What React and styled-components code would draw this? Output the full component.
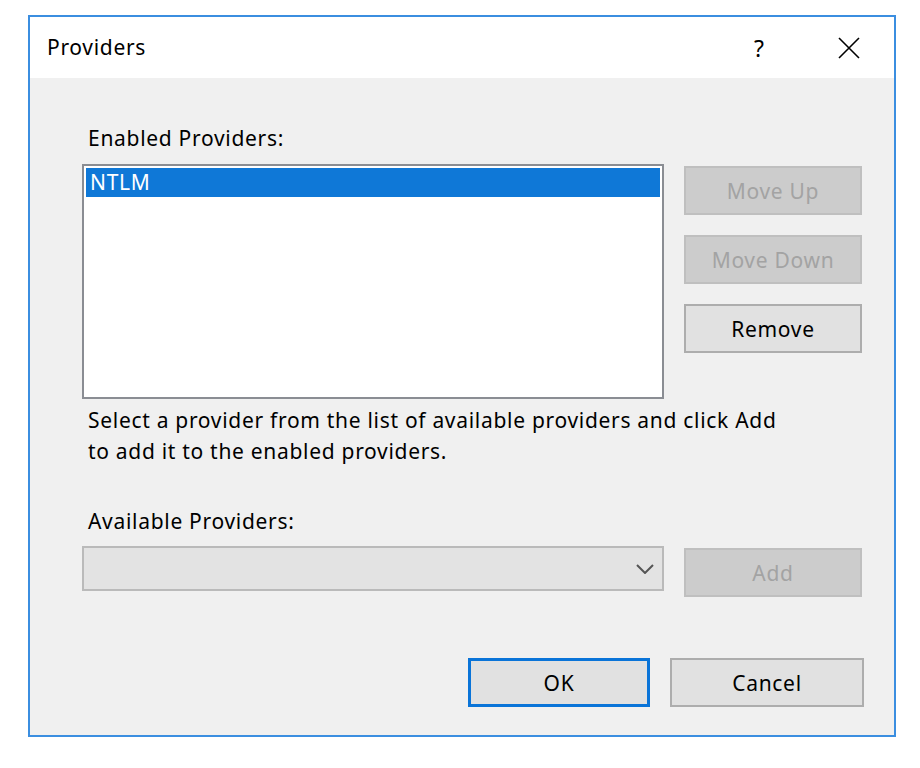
import React, { useState } from 'react';
import styled, { createGlobalStyle } from 'styled-components';

const GlobalStyle = createGlobalStyle`
  body {
    margin: 0;
    background: #ffffff;
    font-family: "Noto Sans", "Open Sans", sans-serif;
    letter-spacing: 0.7px;
  }
`;

const Page = styled.div`
  padding: 15px 0 0 28px;
`;

const Window = styled.div`
  width: 864px;
  height: 718px;
  border: 2px solid #3b8ee0;
  background: #f0f0f0;
  display: flex;
  flex-direction: column;
`;

const TitleBar = styled.div`
  height: 61px;
  background: #ffffff;
  display: flex;
  align-items: center;
  padding-left: 17px;
  color: #000;
  font-size: 21px;
`;

const Title = styled.span`
  flex: 1;
  margin-top: -2px;
`;

const TitleButton = styled.button`
  width: 90px;
  height: 61px;
  border: none;
  background: transparent;
  display: flex;
  align-items: center;
  justify-content: center;
  font-family: inherit;
  font-size: 23px;
  color: #000;
  padding: 0;
`;

const Body = styled.div`
  flex: 1;
  padding: 46px 32px 0 52px;
  font-size: 21px;
  color: #000;
`;

const Label = styled.div`
  line-height: 28px;
  padding-left: 6px;
`;

const Row = styled.div`
  display: grid;
  grid-template-columns: 582px 178px;
  column-gap: 20px;
  align-items: start;
  margin-top: ${p => p.$top || 0}px;
`;

const ListBox = styled.div`
  height: 235px;
  box-sizing: border-box;
  border: 2px solid #8a8d93;
  background: #ffffff;
  padding: 2px;
`;

const ListItem = styled.div`
  height: 29px;
  line-height: 29px;
  padding-left: 4px;
  background: ${p => (p.$selected ? '#0f78d7' : 'transparent')};
  color: ${p => (p.$selected ? '#ffffff' : '#000')};
`;

const ButtonColumn = styled.div`
  display: flex;
  flex-direction: column;
  gap: 20px;
  padding-top: 2px;
`;

const Button = styled.button`
  height: 49px;
  width: ${p => p.$width || 178}px;
  margin-top: ${p => p.$top || 0}px;
  box-sizing: border-box;
  font-family: inherit;
  font-size: 21px;
  letter-spacing: 0.7px;
  padding: 0;
  background: ${p => (p.disabled ? '#cccccc' : '#e1e1e1')};
  color: ${p => (p.disabled ? '#a3a3a3' : '#000')};
  border: ${p => (p.$default ? '3px solid #0a74d8' : p.disabled ? '2px solid #bfbfbf' : '2px solid #adadad')};
`;

const Description = styled.div`
  margin-top: 6px;
  line-height: 31px;
  padding-left: 6px;
`;

const SectionLabel = styled(Label)`
  margin-top: 40px;
`;

const ComboBox = styled.div`
  height: 45px;
  box-sizing: border-box;
  border: 2px solid #bababa;
  background: #e3e3e3;
  display: flex;
  align-items: center;
  justify-content: flex-end;
  padding-right: 8px;
`;

const Footer = styled.div`
  display: flex;
  justify-content: flex-end;
  gap: 20px;
  margin-top: 61px;
  margin-right: -2px;
`;

const Chevron = () => (
  <svg width="18" height="10" viewBox="0 0 18 10">
    <path d="M1 1 L9 9 L17 1" fill="none" stroke="#555" strokeWidth="2" />
  </svg>
);

const CloseIcon = () => (
  <svg width="22" height="22" viewBox="0 0 22 22">
    <path d="M1 1 L21 21 M21 1 L1 21" stroke="#000" strokeWidth="1.6" />
  </svg>
);

const App = () => {
  const [providers] = useState(['NTLM']);
  const [selected] = useState(0);

  return (
    <Page>
      <GlobalStyle />
      <Window>
        <TitleBar>
          <Title>Providers</Title>
          <TitleButton>?</TitleButton>
          <TitleButton>
            <CloseIcon />
          </TitleButton>
        </TitleBar>
        <Body>
          <Label>Enabled Providers:</Label>
          <Row $top={12}>
            <ListBox>
              {providers.map((p, i) => (
                <ListItem key={p} $selected={i === selected}>{p}</ListItem>
              ))}
            </ListBox>
            <ButtonColumn>
              <Button disabled>Move Up</Button>
              <Button disabled>Move Down</Button>
              <Button>Remove</Button>
            </ButtonColumn>
          </Row>
          <Description>
            Select a provider from the list of available providers and click Add
            <br />
            to add it to the enabled providers.
          </Description>
          <SectionLabel>Available Providers:</SectionLabel>
          <Row $top={11}>
            <ComboBox>
              <Chevron />
            </ComboBox>
            <Button disabled $top={2}>Add</Button>
          </Row>
          <Footer>
            <Button $default $width={182}>OK</Button>
            <Button $width={194}>Cancel</Button>
          </Footer>
        </Body>
      </Window>
    </Page>
  );
};

export default App;
